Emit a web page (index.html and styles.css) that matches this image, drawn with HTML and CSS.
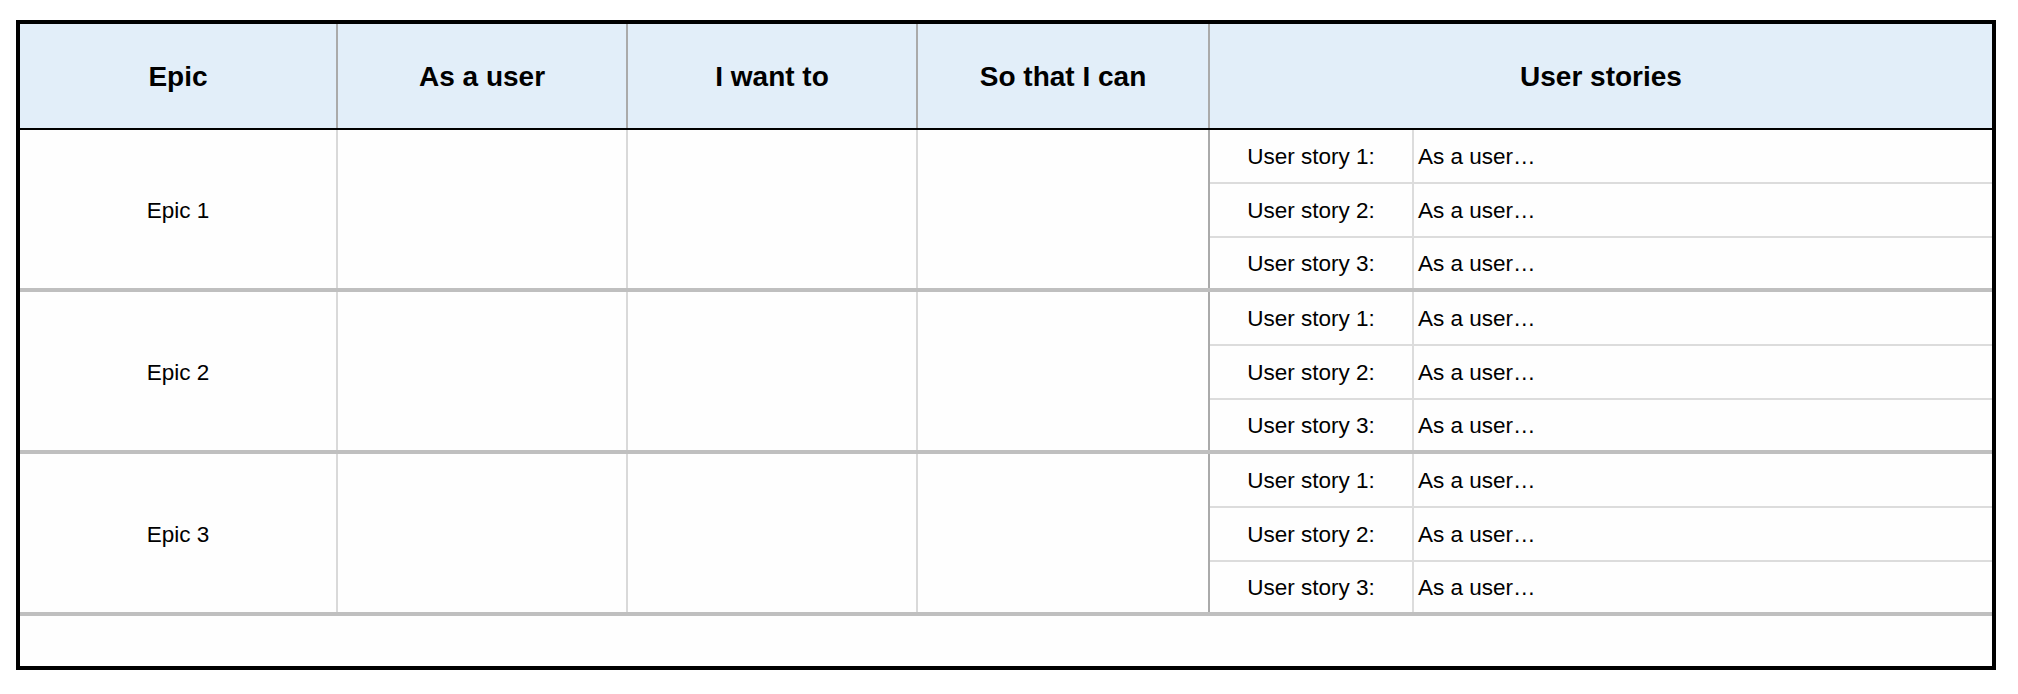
FILE: index.html
```html
<!DOCTYPE html>
<html lang="en">
<head>
<meta charset="utf-8">
<title>Epics and user stories</title>
<link rel="stylesheet" href="styles.css">
</head>
<body>
<div class="sheet">
  <div class="row head">
    <div class="cell">Epic</div>
    <div class="cell">As a user</div>
    <div class="cell">I want to</div>
    <div class="cell">So that I can</div>
    <div class="cell last">User stories</div>
  </div>

  <div class="row epic">
    <div class="cell name">Epic 1</div>
    <div class="cell"></div>
    <div class="cell"></div>
    <div class="cell dark"></div>
    <div class="stories">
      <div class="story"><div class="label">User story 1:</div><div class="text">As a user…</div></div>
      <div class="story"><div class="label">User story 2:</div><div class="text">As a user…</div></div>
      <div class="story"><div class="label">User story 3:</div><div class="text">As a user…</div></div>
    </div>
  </div>

  <div class="row epic">
    <div class="cell name">Epic 2</div>
    <div class="cell"></div>
    <div class="cell"></div>
    <div class="cell dark"></div>
    <div class="stories">
      <div class="story"><div class="label">User story 1:</div><div class="text">As a user…</div></div>
      <div class="story"><div class="label">User story 2:</div><div class="text">As a user…</div></div>
      <div class="story"><div class="label">User story 3:</div><div class="text">As a user…</div></div>
    </div>
  </div>

  <div class="row epic">
    <div class="cell name">Epic 3</div>
    <div class="cell"></div>
    <div class="cell"></div>
    <div class="cell dark"></div>
    <div class="stories">
      <div class="story"><div class="label">User story 1:</div><div class="text">As a user…</div></div>
      <div class="story"><div class="label">User story 2:</div><div class="text">As a user…</div></div>
      <div class="story"><div class="label">User story 3:</div><div class="text">As a user…</div></div>
    </div>
  </div>

  <div class="footer"></div>
</div>
</body>
</html>
```

FILE: styles.css
```css
* { box-sizing: border-box; }

html, body {
  margin: 0;
  padding: 0;
  background: #ffffff;
}

body {
  font-family: "Liberation Sans", Arial, Helvetica, sans-serif;
  color: #000;
  padding: 20px 0 0 16px;
}

.sheet {
  width: 1980px;
  border: 4px solid #000;
  background: #fefefe;
}

.row {
  display: grid;
  grid-template-columns: 318px 290px 290px 292px 782px;
}

.head {
  height: 106px;
  background: #e2eef9;
  border-bottom: 2px solid #000;
  font-size: 28px;
  font-weight: bold;
}

.head .cell {
  display: flex;
  align-items: center;
  justify-content: center;
  padding-top: 2px;
  border-right: 2px solid #aaaaaa;
}

.head .cell.last {
  border-right: none;
}

.epic {
  height: 162px;
  border-bottom: 4px solid #bfbfbf;
}

.epic .cell {
  border-right: 2px solid #d9d9d9;
}

.epic .cell.dark {
  border-right-color: #aaaaaa;
}

.name {
  display: flex;
  align-items: center;
  justify-content: center;
  padding-top: 4px;
  font-size: 22.5px;
}

.stories {
  display: grid;
  grid-template-rows: 54px 54px 50px;
  font-size: 22.5px;
}

.story {
  display: grid;
  grid-template-columns: 204px 1fr;
  border-bottom: 2px solid #dcdcdc;
}

.story:last-child {
  border-bottom: none;
}

.label {
  display: flex;
  align-items: center;
  justify-content: center;
  padding-top: 2px;
  border-right: 2px solid #dcdcdc;
}

.text {
  display: flex;
  align-items: center;
  padding-top: 2px;
  padding-left: 4px;
}

.footer {
  height: 50px;
}
```
